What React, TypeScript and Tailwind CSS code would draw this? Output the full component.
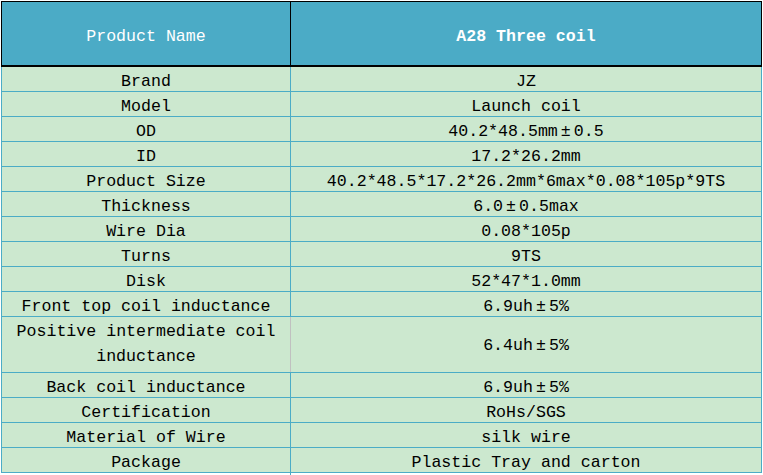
const rows: [string, string][] = [
  ["Brand", "JZ"],
  ["Model", "Launch coil"],
  ["OD", "40.2*48.5mm±0.5"],
  ["ID", "17.2*26.2mm"],
  ["Product Size", "40.2*48.5*17.2*26.2mm*6max*0.08*105p*9TS"],
  ["Thickness", "6.0±0.5max"],
  ["Wire Dia", "0.08*105p"],
  ["Turns", "9TS"],
  ["Disk", "52*47*1.0mm"],
  ["Front top coil inductance", "6.9uh±5%"],
  ["Positive intermediate coil inductance", "6.4uh±5%"],
  ["Back coil inductance", "6.9uh±5%"],
  ["Certification", "RoHs/SGS"],
  ["Material of Wire", "silk wire"],
  ["Package", "Plastic Tray and carton"],
];

// ± is full width in the original font
function Value({ text }: { text: string }) {
  const parts = text.split("±");
  return (
    <span>
      {parts.map((p, i) => (
        <span key={i}>
          {i > 0 && <span className="inline-block w-[16px] text-center">±</span>}
          {p}
        </span>
      ))}
    </span>
  );
}

export default function App() {
  return (
    <div className="w-[763px] h-[475px] bg-white pt-px pl-px font-['Liberation_Mono',monospace] text-[16.6px] leading-[25px]">
      <div className="w-[761px]">
        <div className="grid grid-cols-[289px_1fr] h-[66px] bg-[#4babc6] border-t border-x border-b-2 border-black text-white">
          <div className="flex items-center justify-center pt-[5px] border-r border-black">Product Name</div>
          <div className="flex items-center justify-center pt-[5px] font-bold">A28 Three coil</div>
        </div>
        {rows.map(([k, v]) => {
          const tall = k.startsWith("Positive");
          return (
            <div
              key={k}
              className={`grid grid-cols-[289px_1fr] bg-[#cce8cf] border-x border-b border-[#4bacc6] text-black ${tall ? "h-[56px]" : "h-[25px]"}`}
            >
              <div className={`flex items-center justify-center text-center px-2 border-r ${tall ? "border-[#c0c0c0] pb-[2px]" : "border-[#4bacc6] pt-[2px]"}`}>
                {k}
              </div>
              <div className="flex items-center justify-center text-center pt-[2px]">
                <Value text={v} />
              </div>
            </div>
          );
        })}
      </div>
    </div>
  );
}
